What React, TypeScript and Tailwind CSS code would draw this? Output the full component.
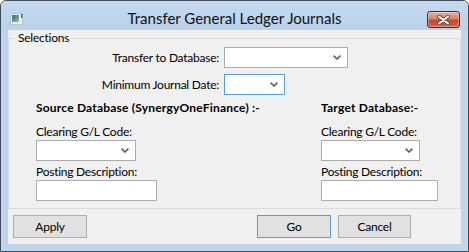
import React from "react";

const font = "font-['Lato','Open_Sans',sans-serif]";

// petite flèche des listes déroulantes
const Chevron = () => (
  <svg width="8" height="5" viewBox="0 0 8 5" className="block">
    <path d="M0.6 0.6 L4 4 L7.4 0.6" stroke="#606060" strokeWidth="1.6" fill="none" />
  </svg>
);

const Combo = ({ w, focus = false }: { w: string; focus?: boolean }) => (
  <div
    className={`${w} h-[21px] bg-white border ${
      focus ? "border-[#569de5]" : "border-[#acacac]"
    } flex items-center justify-end pr-[6px]`}
  >
    <Chevron />
  </div>
);

const TextBox = ({ w }: { w: string }) => (
  <div className={`${w} h-[21px] bg-white border border-[#abadb3]`} />
);

const Button = ({ label, w, primary = false }: { label: string; w: string; primary?: boolean }) => (
  <button
    className={`${w} h-[23px] bg-[#e1e1e1] border ${
      primary ? "border-[#569de5]" : "border-[#adadad]"
    } text-[12px] text-black leading-none`}
  >
    {label}
  </button>
);

const AppIcon = () => (
  <svg width="14" height="12" viewBox="0 0 14 12" className="block">
    <defs>
      <linearGradient id="g1" x1="0" y1="0" x2="1" y2="1">
        <stop offset="0" stopColor="#2f6f78" />
        <stop offset="1" stopColor="#8cc6a8" />
      </linearGradient>
    </defs>
    <rect x="0.5" y="0.5" width="12" height="11" fill="#eef2f6" stroke="#b8c4d0" />
    <rect x="2" y="2" width="7" height="7" fill="url(#g1)" />
    <rect x="11" y="1" width="1.5" height="4" fill="#2b6fd6" />
  </svg>
);

const CloseButton = () => (
  <div className="w-[33px] h-[17px] rounded-[3px] border border-[#5e2219] bg-[linear-gradient(#eab0a2,#dc8069_45%,#c4462d_55%,#d2674c)] flex items-center justify-center shadow-[inset_0_0_0_1px_rgba(255,255,255,0.35)]">
    <svg width="13" height="10" viewBox="0 0 13 10" className="block">
      <path d="M2 1.5 L11 8.5 M11 1.5 L2 8.5" stroke="#4a4a4a" strokeWidth="3.6" strokeLinecap="round" />
      <path d="M2 1.5 L11 8.5 M11 1.5 L2 8.5" stroke="#ffffff" strokeWidth="2" strokeLinecap="round" />
    </svg>
  </div>
);

export default function App() {
  return (
    <div className={`w-[469px] h-[252px] bg-white ${font}`}>
      <div className="w-full h-full rounded-t-[6px] border border-[#404c58] bg-[#bfd5ec] flex flex-col px-[7px] pb-[7px]">
        {/* barre de titre */}
        <div className="h-[29px] -mx-[7px] grid grid-cols-[1fr_auto_1fr] items-start bg-[linear-gradient(#c6d9ee,#bad2ea)] rounded-t-[5px]">
          <div className="pl-[9px] pt-[12px]">
            <AppIcon />
          </div>
          <div className="pt-[7px] text-[15px] leading-[20px] text-[#111]">Transfer General Ledger Journals</div>
          <div className="flex justify-end pr-[8px] pt-[10px]">
            <CloseButton />
          </div>
        </div>

        {/* zone client */}
        <div className="flex-1 bg-[#f0f0f0] flex flex-col text-[12px] leading-4 tracking-[-0.25px] text-black">
          {/* groupe "Selections" */}
          <div className="relative mt-[8px] border border-[#dcdcdc] pt-[8px] pb-[7px]">
            <span className="absolute -top-[9px] left-[6px] px-[3px] bg-[#f0f0f0]">Selections</span>

            <div className="grid grid-cols-[210px_auto] gap-x-[5px] gap-y-[6px] items-center">
              <span className="text-right">Transfer to Database:</span>
              <Combo w="w-[124px]" />
              <span className="text-right">Minimum Journal Date:</span>
              <Combo w="w-[61px]" focus />
            </div>

            <div className="grid grid-cols-[312px_1fr] mt-[5px]">
              <div className="pl-[27px] flex flex-col">
                <span className="font-bold tracking-[0.2px]">Source Database (SynergyOneFinance) :-</span>
                <span className="mt-[8px]">Clearing G/L Code:</span>
                <Combo w="w-[100px]" />
                <span className="mt-[3px]">Posting Description:</span>
                <TextBox w="w-[121px]" />
              </div>
              <div className="flex flex-col">
                <span className="font-bold tracking-[0.2px]">Target Database:-</span>
                <span className="mt-[8px]">Clearing G/L Code:</span>
                <Combo w="w-[99px]" />
                <span className="mt-[3px]">Posting Description:</span>
                <TextBox w="w-[117px]" />
              </div>
            </div>
          </div>

          {/* boutons */}
          <div className="flex mt-[6px] pl-[5px] pr-[50px] gap-[7px]">
            <Button label="Apply" w="w-[74px]" />
            <div className="ml-auto" />
            <Button label="Go" w="w-[74px]" primary />
            <Button label="Cancel" w="w-[73px]" />
          </div>
        </div>
      </div>
    </div>
  );
}
